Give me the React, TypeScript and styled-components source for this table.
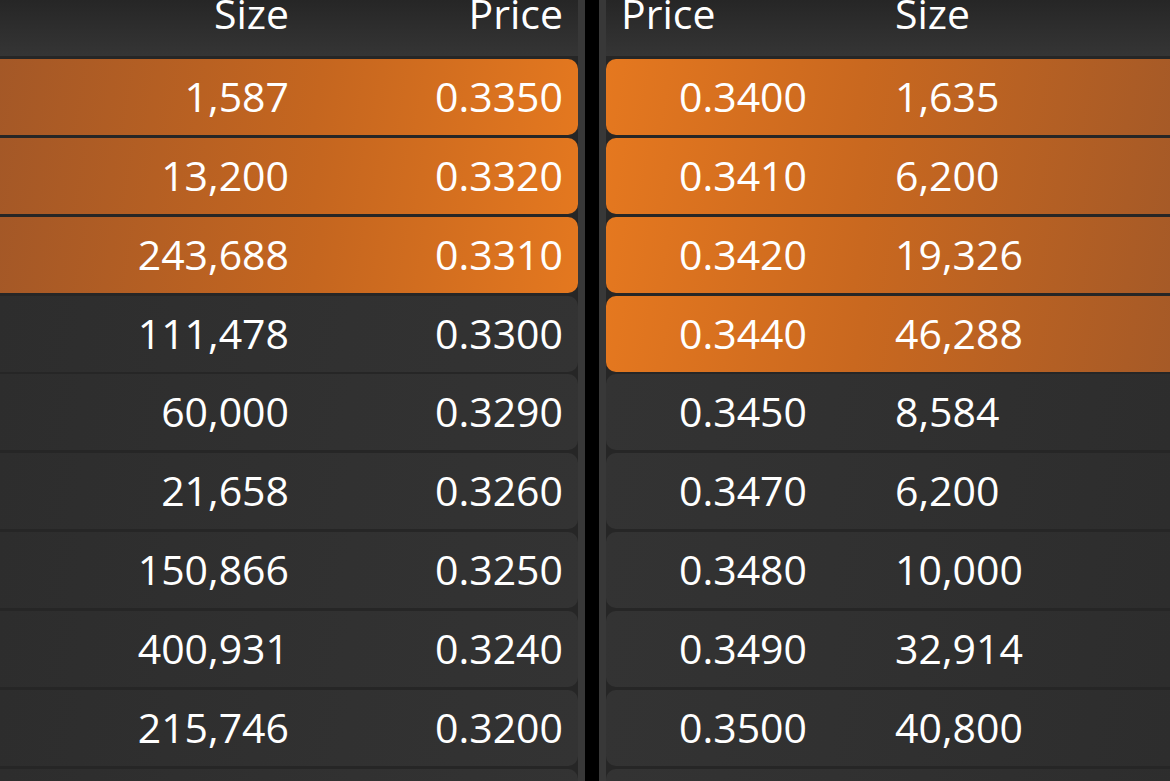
import React from "react";
import styled, { createGlobalStyle, css } from "styled-components";

const Global = createGlobalStyle`
  html, body {
    margin: 0;
    padding: 0;
    height: 100%;
    overflow: hidden;
    background: #262626;
  }
  #root { height: 100%; }
`;

type Side = "bid" | "ask";

const Book = styled.div`
  display: flex;
  height: 100vh;
  font-family: "Open Sans", "Noto Sans", sans-serif;
  font-size: 41px;
  line-height: 40px;
  color: #ffffff;
  background: #262626;
`;

const Panel = styled.section<{ $side: Side }>`
  display: flex;
  flex-direction: column;
  gap: 2.875px;
  background: #262626;
  overflow: hidden;
  ${(p) =>
    p.$side === "bid"
      ? css`
          width: 578px;
          border-right: 7px solid #383838;
        `
      : css`
          flex: 1;
          border-left: 7px solid #383838;
        `}
`;

const Divider = styled.div`
  width: 14px;
  flex: none;
  background: #000;
`;

const Header = styled.div<{ $side: Side }>`
  height: 56px;
  flex: none;
  display: grid;
  align-items: start;
  align-content: start;
  box-sizing: border-box;
  line-height: 26px;
  background: linear-gradient(180deg, #262626 0%, #2f2f2f 60%, #353535 100%);
  ${(p) =>
    p.$side === "bid"
      ? css`
          grid-template-columns: 1fr 274px;
          padding-right: 15px;
          text-align: right;
        `
      : css`
          grid-template-columns: 274px 1fr;
          padding-left: 15px;
          text-align: left;
        `}
`;

const Row = styled.div<{ $side: Side; $hot: boolean }>`
  height: 76px;
  flex: none;
  display: grid;
  align-items: center;
  box-sizing: border-box;
  padding-bottom: 2px;
  ${(p) =>
    p.$side === "bid"
      ? css`
          grid-template-columns: 1fr 274px;
          padding-right: 15px;
          text-align: right;
          border-radius: 0 10px 10px 0;
          background: ${p.$hot
            ? "linear-gradient(100deg, #a45827 0%, #c5661f 55%, #e4781f 100%)"
            : "linear-gradient(100deg, #2d2d2d 0%, #313131 60%, #333333 100%)"};
        `
      : css`
          grid-template-columns: 216px 1fr;
          padding-left: 73px;
          text-align: left;
          border-radius: 10px 0 0 10px;
          background: ${p.$hot
            ? "linear-gradient(100deg, #e5781f 0%, #c9681f 45%, #a65a27 100%)"
            : "linear-gradient(100deg, #333333 0%, #313131 40%, #2d2d2d 100%)"};
        `}
`;

const Cell = styled.span`
  white-space: nowrap;
`;

const bids: [string, string, boolean][] = [
  ["1,587", "0.3350", true],
  ["13,200", "0.3320", true],
  ["243,688", "0.3310", true],
  ["111,478", "0.3300", false],
  ["60,000", "0.3290", false],
  ["21,658", "0.3260", false],
  ["150,866", "0.3250", false],
  ["400,931", "0.3240", false],
  ["215,746", "0.3200", false],
  ["", "", false],
];

const asks: [string, string, boolean][] = [
  ["0.3400", "1,635", true],
  ["0.3410", "6,200", true],
  ["0.3420", "19,326", true],
  ["0.3440", "46,288", true],
  ["0.3450", "8,584", false],
  ["0.3470", "6,200", false],
  ["0.3480", "10,000", false],
  ["0.3490", "32,914", false],
  ["0.3500", "40,800", false],
  ["", "", false],
];

export default function App() {
  return (
    <>
      <Global />
      <Book>
        <Panel $side="bid">
          <Header $side="bid">
            <Cell>Size</Cell>
            <Cell>Price</Cell>
          </Header>
          {bids.map(([size, price, hot], i) => (
            <Row key={i} $side="bid" $hot={hot}>
              <Cell>{size}</Cell>
              <Cell>{price}</Cell>
            </Row>
          ))}
        </Panel>
        <Divider />
        <Panel $side="ask">
          <Header $side="ask">
            <Cell>Price</Cell>
            <Cell>Size</Cell>
          </Header>
          {asks.map(([price, size, hot], i) => (
            <Row key={i} $side="ask" $hot={hot}>
              <Cell>{price}</Cell>
              <Cell>{size}</Cell>
            </Row>
          ))}
        </Panel>
      </Book>
    </>
  );
}
